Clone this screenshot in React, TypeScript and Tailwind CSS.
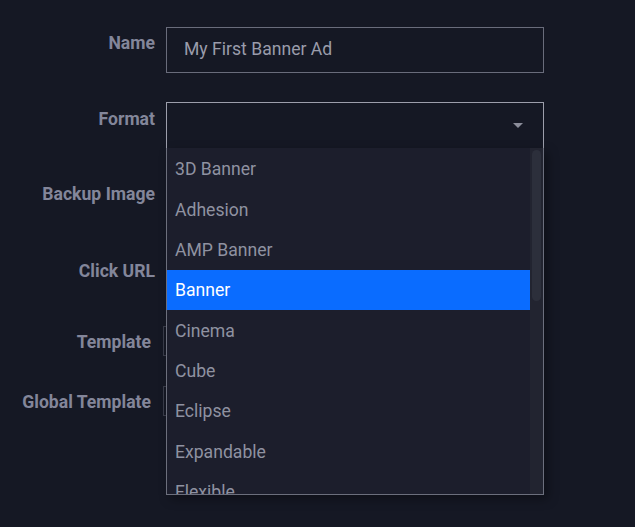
import { useState } from "react";

const FORMATS = [
  "3D Banner",
  "Adhesion",
  "AMP Banner",
  "Banner",
  "Cinema",
  "Cube",
  "Eclipse",
  "Expandable",
  "Flexible",
];

function Label({ text, width = "w-[155px]", pad = "pt-[5px]" }: { text: string; width?: string; pad?: string }) {
  return (
    <div className={`${width} ${pad} shrink-0 text-right text-[17.6px] font-bold leading-[22px] text-[#83869a]`}>
      {text}
    </div>
  );
}

export default function App() {
  const [selected] = useState("Banner");

  return (
    <div
      className="h-[527px] w-[635px] overflow-hidden bg-[#151824]"
      style={{ fontFamily: "Roboto, 'Liberation Sans', sans-serif" }}
    >
      <div className="flex flex-col pt-[27px]">
        {/* Name */}
        <div className="flex gap-[11px]">
          <Label text="Name" />
          <div className="flex h-[46px] w-[378px] items-center border border-[#696c7b] px-[17px] pb-[1px] text-[17.6px] text-[#9a9cab]">
            My First Banner Ad
          </div>
        </div>

        {/* Format */}
        <div className="mt-[29px] flex gap-[11px]">
          <Label text="Format" pad="pt-[6px]" />
          <div className="relative z-10">
            <div className="flex h-[47px] w-[378px] items-center justify-end border border-[#9c9eab] bg-[#151824] pr-[20px]">
              <svg width="10" height="6" viewBox="0 0 10 6">
                <path d="M0 0 L10 0 L5 5 Z" fill="#8b8d9a" />
              </svg>
            </div>
            <div className="absolute left-0 top-[46px] flex h-[347px] w-[378px] border-x border-b border-[#6c6f7d] bg-[#1c1e2c] shadow-[4px_4px_10px_rgba(0,0,0,0.35)]">
              <ul className="flex-1 overflow-hidden pt-[1px]">
                {FORMATS.map((f) => (
                  <li
                    key={f}
                    className={`flex h-[40.3px] items-center pl-[8px] pt-[1px] text-[17.6px] ${
                      f === selected ? "bg-[#0a6cff] text-white" : "text-[#8f92a1]"
                    }`}
                  >
                    {f}
                  </li>
                ))}
              </ul>
              <div className="w-[13px] bg-[#222430] px-[2px] pt-[2px]">
                <div className="h-[151px] rounded-full bg-[#2c2f3b]" />
              </div>
            </div>
          </div>
        </div>

        {/* Backup Image */}
        <div className="mt-[29px] flex gap-[11px]">
          <Label text="Backup Image" />
          <div className="h-[46px] w-[378px] border border-[#696c7b]" />
        </div>

        {/* Click URL */}
        <div className="mt-[30px] flex gap-[11px]">
          <Label text="Click URL" pad="pt-[6px]" />
          <div className="h-[46px] w-[378px] border border-[#696c7b]" />
        </div>

        {/* Template */}
        <div className="mt-[26px] flex gap-[12px]">
          <Label text="Template" width="w-[151px]" />
          <div className="h-[30px] w-[378px] border border-[#3a3d4a]" />
        </div>

        {/* Global Template */}
        <div className="mt-[30px] flex gap-[12px]">
          <Label text="Global Template" width="w-[151px]" />
          <div className="h-[30px] w-[378px] border border-[#3a3d4a]" />
        </div>
      </div>
    </div>
  );
}
